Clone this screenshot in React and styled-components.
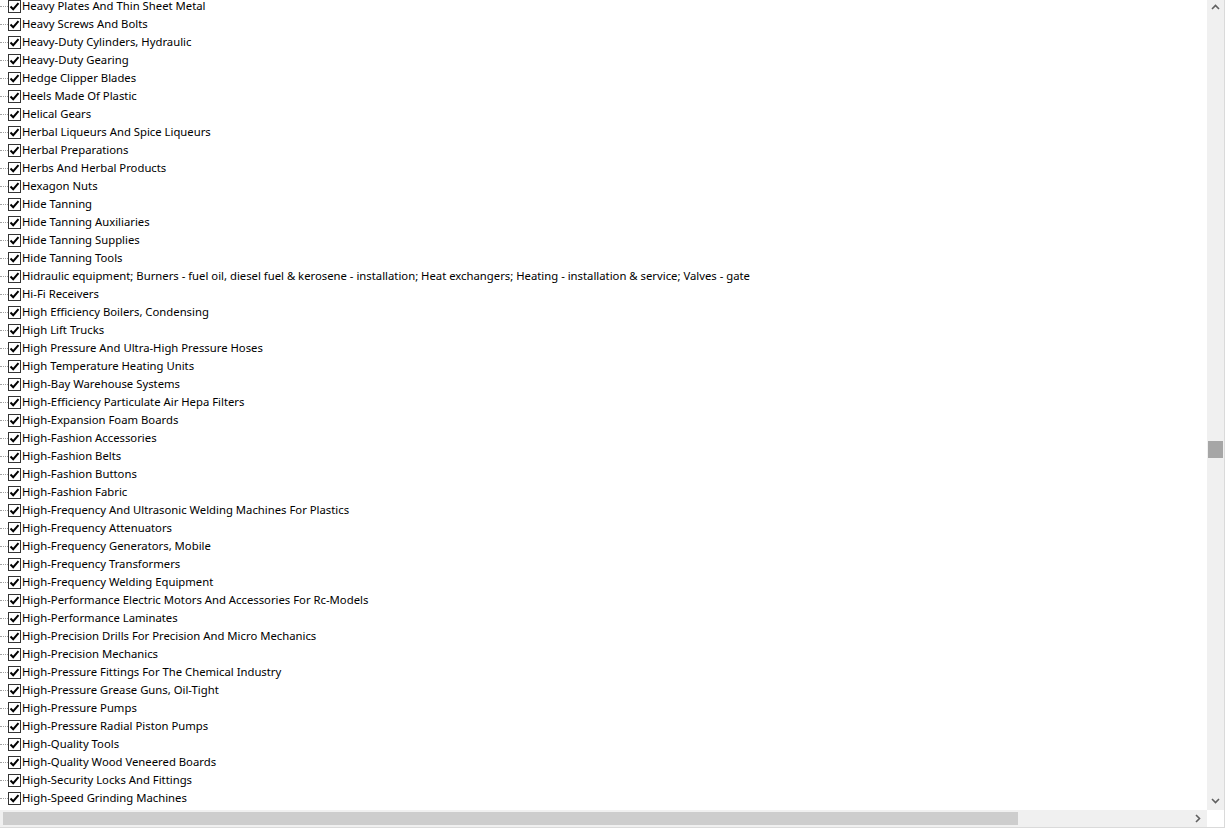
import React from "react";
import styled, { createGlobalStyle } from "styled-components";

const Global = createGlobalStyle`
  html, body { margin: 0; padding: 0; background: #ffffff; overflow: hidden; }
  #root { width: 1229px; height: 836px; }
`;

const items = [
  "Heavy Plates And Thin Sheet Metal",
  "Heavy Screws And Bolts",
  "Heavy-Duty Cylinders, Hydraulic",
  "Heavy-Duty Gearing",
  "Hedge Clipper Blades",
  "Heels Made Of Plastic",
  "Helical Gears",
  "Herbal Liqueurs And Spice Liqueurs",
  "Herbal Preparations",
  "Herbs And Herbal Products",
  "Hexagon Nuts",
  "Hide Tanning",
  "Hide Tanning Auxiliaries",
  "Hide Tanning Supplies",
  "Hide Tanning Tools",
  "Hidraulic equipment; Burners - fuel oil, diesel fuel & kerosene - installation; Heat exchangers; Heating - installation & service; Valves - gate",
  "Hi-Fi Receivers",
  "High Efficiency Boilers, Condensing",
  "High Lift Trucks",
  "High Pressure And Ultra-High Pressure Hoses",
  "High Temperature Heating Units",
  "High-Bay Warehouse Systems",
  "High-Efficiency Particulate Air Hepa Filters",
  "High-Expansion Foam Boards",
  "High-Fashion Accessories",
  "High-Fashion Belts",
  "High-Fashion Buttons",
  "High-Fashion Fabric",
  "High-Frequency And Ultrasonic Welding Machines For Plastics",
  "High-Frequency Attenuators",
  "High-Frequency Generators, Mobile",
  "High-Frequency Transformers",
  "High-Frequency Welding Equipment",
  "High-Performance Electric Motors And Accessories For Rc-Models",
  "High-Performance Laminates",
  "High-Precision Drills For Precision And Micro Mechanics",
  "High-Precision Mechanics",
  "High-Pressure Fittings For The Chemical Industry",
  "High-Pressure Grease Guns, Oil-Tight",
  "High-Pressure Pumps",
  "High-Pressure Radial Piston Pumps",
  "High-Quality Tools",
  "High-Quality Wood Veneered Boards",
  "High-Security Locks And Fittings",
  "High-Speed Grinding Machines",
];

const Frame = styled.div`
  box-sizing: border-box;
  width: 1225px;
  height: 828px;
  border-right: 1px solid #dadada;
  border-bottom: 1px solid #dadada;
  display: grid;
  grid-template-columns: 1fr 17px;
  grid-template-rows: 1fr 17px;
  background: #ffffff;
`;

const Viewport = styled.div`
  overflow: hidden;
  position: relative;
`;

const List = styled.ul`
  list-style: none;
  margin: -3px 0 0 0;
  padding: 0;
`;

const Row = styled.li`
  height: 18px;
  display: flex;
  align-items: center;
  white-space: nowrap;
`;

const Dots = styled.span`
  width: 8px;
  height: 0;
  border-top: 1px dotted #a0a0a0;
  flex: none;
`;

const Box = styled.span`
  box-sizing: border-box;
  width: 13px;
  height: 13px;
  border: 1px solid #333333;
  background: #ffffff;
  display: flex;
  align-items: center;
  justify-content: center;
  flex: none;
`;

const Label = styled.span`
  margin-left: 1px;
  font-family: "Noto Sans", "Open Sans", sans-serif;
  font-size: 11.3px;
  color: #000000;
  line-height: 18px;
`;

const VTrack = styled.div`
  background: #f0f0f0;
  display: flex;
  flex-direction: column;
  align-items: center;
`;

const HTrack = styled.div`
  background: #f0f0f0;
  display: flex;
  align-items: center;
`;

const Corner = styled.div`
  background: #ffffff;
`;

const ArrowBtn = styled.div`
  width: 17px;
  height: 17px;
  display: flex;
  align-items: center;
  justify-content: center;
  flex: none;
  color: #606060;
`;

const VSpace = styled.div`
  flex: ${(p) => p.$grow || "none"};
  height: ${(p) => (p.$h != null ? `${p.$h}px` : "auto")};
  width: 100%;
`;

const VThumb = styled.div`
  width: 15px;
  height: 17px;
  background: #a6a6a6;
  flex: none;
`;

const HThumb = styled.div`
  margin-left: 3px;
  width: 1015px;
  height: 13px;
  background: #cdcdcd;
  flex: none;
`;

const HSpace = styled.div`
  flex: 1;
`;

const Check = () => (
  <svg width="11" height="11" viewBox="0 0 11 11">
    <path d="M1.5 5.5 L4.2 8.2 L9.5 2.2" fill="none" stroke="#000" strokeWidth="2" />
  </svg>
);

const Chevron = ({ dir }) => {
  const d = {
    up: "M1 5 L4.5 1.5 L8 5",
    down: "M1 2 L4.5 5.5 L8 2",
    right: "M2 1 L5.5 4.5 L2 8",
  }[dir];
  return (
    <svg width="9" height="9" viewBox="0 0 9 9">
      <path d={d} fill="none" stroke="currentColor" strokeWidth="1.6" />
    </svg>
  );
};

export default function App() {
  return (
    <>
      <Global />
      <Frame>
        <Viewport>
          <List>
            {items.map((t) => (
              <Row key={t}>
                <Dots />
                <Box>
                  <Check />
                </Box>
                <Label>{t}</Label>
              </Row>
            ))}
          </List>
        </Viewport>
        <VTrack>
          <ArrowBtn>
            <Chevron dir="up" />
          </ArrowBtn>
          <VSpace $h={424} />
          <VThumb />
          <VSpace $grow={1} />
          <ArrowBtn>
            <Chevron dir="down" />
          </ArrowBtn>
        </VTrack>
        <HTrack>
          <HThumb />
          <HSpace />
          <ArrowBtn>
            <Chevron dir="right" />
          </ArrowBtn>
        </HTrack>
        <Corner />
      </Frame>
    </>
  );
}
